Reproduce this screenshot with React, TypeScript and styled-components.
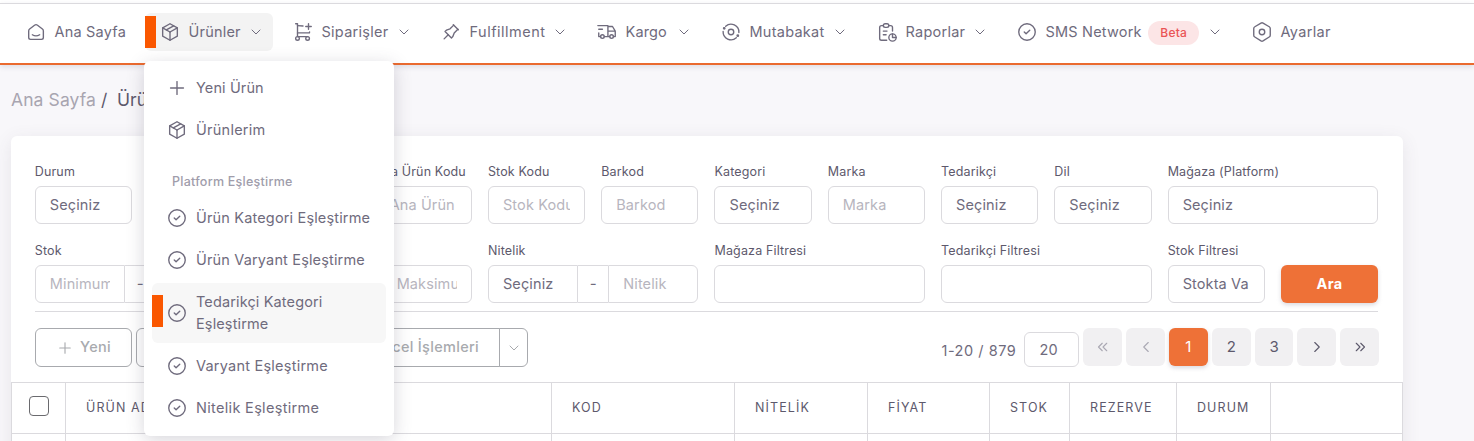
import React from 'react';
import styled, { createGlobalStyle, css } from 'styled-components';
import {
  TbSmartHome, TbPackage, TbPin, TbTruckDelivery, TbReport,
  TbCircleCheck, TbSettings2, TbPlus, TbChevronDown, TbChevronLeft, TbChevronRight, TbChevronsLeft, TbChevronsRight,
} from 'react-icons/tb';

const GlobalStyle = createGlobalStyle`
  * { box-sizing: border-box; }
  body {
    margin: 0;
    height: 441px;
    overflow: hidden;
    background: #f8f7fa;
    color: #6f6b7d;
    font: 400 15px/22px Inter, "Public Sans", sans-serif;
  }
  svg, svg * { stroke-width: 1.5; }
  svg { flex: none; display: block; }
  input, button { font: inherit; color: inherit; }
`;

const Page = styled.div`
  height: 441px;
  overflow: hidden;
  padding-top: 3px;
  background: #fff;
`;

const Navbar = styled.nav`
  position: relative;
  height: 62px;
  padding: 9px 0 0 11px;
  display: flex;
  border-top: 1px solid #dbdade;
  border-bottom: 2px solid #ea6a2f;
  box-shadow: 0 2px 5px rgba(75, 70, 92, 0.14);
`;

const NavItem = styled.div<{ $w: number; $active?: boolean }>`
  position: relative;
  flex: none;
  width: ${(p) => p.$w}px;
  height: 38px;
  margin-right: 5px;
  padding: 0 9px 0 13.5px;
  display: flex;
  align-items: center;
  border-radius: 6px;
  background: ${(p) => (p.$active ? '#f3f3f3' : 'transparent')};
`;

const Label = styled.span<{ $ls?: number; $size?: number }>`
  white-space: nowrap;
  font-size: ${(p) => p.$size ?? 14.5}px;
  letter-spacing: ${(p) => p.$ls ?? 0.12}px;
`;

const NavLabel = styled(Label)`
  margin: 0 auto 0 8px;
`;

const Marker = styled.i<{ $top: number }>`
  position: absolute;
  left: 0;
  top: ${(p) => p.$top}px;
  width: 11px;
  height: 32px;
  background: #fa5700;
`;

const Badge = styled.span`
  height: 24px;
  padding: 0 12px;
  margin: 2px 8px 0 0;
  border-radius: 12px;
  background: #fce5e6;
  color: #ea5455;
  font-size: 12px;
  font-weight: 500;
  letter-spacing: 0.2px;
  line-height: 24px;
`;

const Menu = styled.div`
  position: absolute;
  z-index: 5;
  left: 144px;
  top: 57px;
  width: 250px;
  height: 375px;
  padding: 8px;
  display: flex;
  flex-direction: column;
  gap: 4px;
  border-radius: 6px;
  background: #fff;
  box-shadow: 0 4px 18px rgba(75, 70, 92, 0.22);
`;

const MenuItem = styled.div<{ $active?: boolean }>`
  position: relative;
  display: flex;
  align-items: center;
  gap: 8px;
  padding: 8px 8px 8px 14px;
  border-radius: 6px;
  background: ${(p) => (p.$active ? '#f7f7f7' : 'transparent')};
`;

const MenuHeader = styled.div`
  height: 42px;
  padding: 18px 0 0 20px;
  color: #a09dab;
  font-weight: 500;
  line-height: 20px;
`;

const Main = styled.main`
  height: 376px;
  padding: 23px 71px 0 11px;
  background: #f8f7fa;
`;

const Breadcrumb = styled.div`
  height: 24px;
  margin-bottom: 24px;
  display: flex;
  font-size: 17.5px;
  line-height: 24px;
  color: #5d596c;
  white-space: pre;
`;

const Muted = styled.span`
  color: #a8a5b0;
  letter-spacing: 0.1px;
`;

const Card = styled.section`
  height: 340px;
  padding-top: 24px;
  border-radius: 6px;
  background: #fff;
  box-shadow: 0 4px 18px rgba(75, 70, 92, 0.1);
`;

const Filters = styled.div`
  display: grid;
  grid-template-columns: repeat(12, minmax(0, 1fr));
  column-gap: 16px;
  row-gap: 15px;
  margin: 0 24.8px 0 23.8px;
  padding-bottom: 8px;
  border-bottom: 1px solid #dbdade;
`;

const Field = styled.div<{ $span?: number }>`
  grid-column: span ${(p) => p.$span ?? 1};
  display: flex;
  flex-direction: column;
  justify-content: flex-end;
`;

const FieldLabel = styled.label`
  height: 26px;
  line-height: 22px;
  color: #5d596c;
  white-space: nowrap;
`;

const Control = styled.div<{ $muted?: boolean }>`
  flex: 1 1 0;
  min-width: 0;
  height: 38px;
  padding: 0 14px;
  border: 1px solid #dbdade;
  border-radius: 6px;
  background: #fff;
  color: ${(p) => (p.$muted ? '#b7b5be' : '#6f6b7d')};
  line-height: 35px;
`;

const Clip = styled.div`
  overflow: hidden;
  white-space: nowrap;
`;

const ControlRow = styled.div`
  display: flex;
  height: 38px;
`;

const Group = styled(ControlRow)`
  ${Control}:first-child { border-radius: 6px 0 0 6px; }
  ${Control}:last-child { border-radius: 0 6px 6px 0; }
`;

const Dash = styled.span`
  width: 30px;
  border: solid #dbdade;
  border-width: 1px 0;
  line-height: 35px;
  text-align: center;
`;

const SearchButton = styled.button`
  height: 38px;
  border: 0;
  border-radius: 6px;
  background: #ee7137;
  box-shadow: 0 2px 4px rgba(165, 163, 174, 0.4);
  color: #fff;
  font-size: 14.5px;
  font-weight: 700;
  letter-spacing: 0.3px;
`;

const Toolbar = styled.div`
  height: 70px;
  margin: 0 24px;
  padding-top: 16px;
  display: flex;
  align-items: flex-start;
`;

const outline = css`
  height: 39px;
  border: 1px solid #a8aaae;
  color: #a8aaae;
  font-size: 14.5px;
  font-weight: 500;
  letter-spacing: 0.3px;
  line-height: 36px;
  display: flex;
  justify-content: center;
  svg { align-self: center; }
`;

const OutlineButton = styled.div<{ $w: number; $r: string }>`
  ${outline}
  width: ${(p) => p.$w}px;
  border-radius: ${(p) => p.$r};
  margin-right: 4px;
  gap: 6px;
`;

const SplitMain = styled.div`
  ${outline}
  width: 228px;
  padding-right: 20px;
  justify-content: flex-end;
  border-radius: 6px 0 0 6px;
`;

const SplitToggle = styled.div`
  ${outline}
  width: 29px;
  margin-left: -1px;
  border-radius: 0 6px 6px 0;
`;

const Pager = styled.div`
  margin-left: auto;
  display: flex;
  gap: 4px;
`;

const Count = styled.span`
  margin: 12px 4px 0 0;
  white-space: nowrap;
`;

const PageSize = styled.div`
  width: 55px;
  height: 35px;
  margin-top: 4px;
  padding-left: 14px;
  border: 1px solid #dbdade;
  border-radius: 6px;
  line-height: 34px;
`;

const PageButton = styled.div<{ $active?: boolean; $disabled?: boolean }>`
  width: 38.8px;
  height: 38px;
  display: flex;
  align-items: center;
  justify-content: center;
  border-radius: 6px;
  background: ${(p) => (p.$active ? '#ee7137' : '#f1f0f2')};
  color: ${(p) => (p.$active ? '#fff' : p.$disabled ? '#aaa8b3' : '#5d596c')};
  box-shadow: ${(p) => (p.$active ? '0 2px 4px rgba(165,163,174,.4)' : 'none')};
`;

const Table = styled.div`
  display: grid;
  grid-template-columns: 54px 486px 183px 133px 122px 80px 107px 94px 132px;
  grid-template-rows: 51px 51px;
  height: 59px;
  overflow: hidden;
  border-left: 1px solid #dbdade;
`;

const Cell = styled.div`
  border-top: 1px solid #dbdade;
  border-right: 1px solid #dbdade;
  padding-left: 20px;
  line-height: 48px;
  color: #5d596c;
`;

const Checkbox = styled.span`
  display: block;
  width: 20px;
  height: 20px;
  margin: 13px 0 0 -3px;
  border: 1.5px solid #6a6a6e;
  border-radius: 4px;
`;

const LineIcon = styled.svg.attrs({ viewBox: '0 0 24 24', fill: 'none', stroke: 'currentColor', strokeLinecap: 'round', strokeLinejoin: 'round' })``;

function CartPlusIcon({ size = 22 }) {
  return (
    <LineIcon width={size} height={size}>
      <circle cx="6" cy="19" r="2" />
      <circle cx="17" cy="19" r="2" />
      <path d="M17 17H6V3H4" />
      <path d="M6 5l6.005 .429M19.143 12.002L19 13H6" />
      <path d="M15 6h6M18 3v6" />
    </LineIcon>
  );
}

function ReconcileIcon({ size = 22 }) {
  return (
    <LineIcon width={size} height={size}>
      <circle cx="12" cy="12" r="3" />
      <path d="M6.2 5.8a8.6 8.6 0 0 1 14.4 6.7" />
      <path d="M17.8 18.2a8.6 8.6 0 0 1 -14.4 -6.7" />
      <circle cx="4.6" cy="8" r=".8" fill="currentColor" />
      <circle cx="19.4" cy="16" r=".8" fill="currentColor" />
    </LineIcon>
  );
}

const NAV = [
  { icon: TbSmartHome, text: 'Ana Sayfa', w: 129, plain: true, ls: 0.2 },
  { icon: TbPackage, text: 'Ürünler', w: 128, active: true, ls: 0.2 },
  { icon: CartPlusIcon, text: 'Siparişler', w: 143, ls: 0.28 },
  { icon: TbPin, text: 'Fulfillment', w: 151, ls: 0.5 },
  { icon: TbTruckDelivery, text: 'Kargo', w: 119, ls: 0.15 },
  { icon: ReconcileIcon, text: 'Mutabakat', w: 151, ls: 0.25 },
  { icon: TbReport, text: 'Raporlar', w: 135, ls: 0.25 },
  { icon: TbCircleCheck, text: 'SMS Network', w: 230, badge: true, ls: 0.2 },
  { icon: TbSettings2, text: 'Ayarlar', w: 110, plain: true, ls: 0.3 },
];

const MATCH_ITEMS = [
  { lines: ['Ürün Kategori Eşleştirme'], ls: 0.16 },
  { lines: ['Ürün Varyant Eşleştirme'], ls: 0.16 },
  { lines: ['Tedarikçi Kategori', 'Eşleştirme'], ls: 0.13, active: true },
  { lines: ['Varyant Eşleştirme'], ls: 0.23 },
  { lines: ['Nitelik Eşleştirme'], ls: 0.32 },
];

function Input({ text = '', muted = false }) {
  return <Control $muted={muted}><Clip><Label>{text}</Label></Clip></Control>;
}

function FormField({ label, text, muted, span }: { label: string; text?: string; muted?: boolean; span?: number }) {
  return (
    <Field $span={span}>
      <FieldLabel><Label $size={12.5} $ls={0.15}>{label}</Label></FieldLabel>
      <ControlRow><Input text={text} muted={muted} /></ControlRow>
    </Field>
  );
}

function RangeField({ label, from, to, fromMuted }: { label: string; from: string; to: string; fromMuted?: boolean }) {
  return (
    <Field $span={2}>
      <FieldLabel><Label $size={12.5} $ls={0.15}>{label}</Label></FieldLabel>
      <Group><Input text={from} muted={fromMuted} /><Dash>-</Dash><Input text={to} muted /></Group>
    </Field>
  );
}

export default function App() {
  return (
    <Page>
      <GlobalStyle />
      <Navbar>
        {NAV.map(({ icon: Icon, text, w, active, plain, badge, ls }) => (
          <NavItem key={text} $w={w} $active={active}>
            {active && <Marker $top={3} />}
            <Icon size={22} />
            <NavLabel $ls={ls}>{text}</NavLabel>
            {badge && <Badge>Beta</Badge>}
            {!plain && <TbChevronDown size={16} />}
          </NavItem>
        ))}
        <Menu>
          <MenuItem><TbPlus size={22} /><Label>Yeni Ürün</Label></MenuItem>
          <MenuItem><TbPackage size={22} /><Label $ls={0.25}>Ürünlerim</Label></MenuItem>
          <MenuHeader><Label $size={12.5} $ls={0.25}>Platform Eşleştirme</Label></MenuHeader>
          {MATCH_ITEMS.map(({ lines, ls, active }) => (
            <MenuItem key={lines[0]} $active={active}>
              {active && <Marker $top={12} />}
              <TbCircleCheck size={22} />
              <Label $ls={ls}>{lines.map((s) => <div key={s}>{s}</div>)}</Label>
            </MenuItem>
          ))}
        </Menu>
      </Navbar>
      <Main>
        <Breadcrumb><Muted>Ana Sayfa</Muted> /  Ürünler</Breadcrumb>
        <Card>
          <Filters>
            <FormField label="Durum" text="Seçiniz" />
            <FormField label="" span={2} />
            <FormField label="Ana Ürün Kodu" text="Ana Ürün" muted />
            <FormField label="Stok Kodu" text="Stok Kodu" muted />
            <FormField label="Barkod" text="Barkod" muted />
            <FormField label="Kategori" text="Seçiniz" />
            <FormField label="Marka" text="Marka" muted />
            <FormField label="Tedarikçi" text="Seçiniz" />
            <FormField label="Dil" text="Seçiniz" />
            <FormField label="Mağaza (Platform)" text="Seçiniz" span={2} />
            <RangeField label="Stok" from="Minimum" to="" fromMuted />
            <RangeField label="" from="" to="Maksimum" fromMuted />
            <RangeField label="Nitelik" from="Seçiniz" to="Nitelik" />
            <FormField label="Mağaza Filtresi" span={2} />
            <FormField label="Tedarikçi Filtresi" span={2} />
            <FormField label="Stok Filtresi" text="Stokta Va" />
            <Field><SearchButton>Ara</SearchButton></Field>
          </Filters>
          <Toolbar>
            <OutlineButton $w={97} $r="6px"><TbPlus size={18} />Yeni</OutlineButton>
            <OutlineButton $w={132} $r="6px" />
            <SplitMain>Excel İşlemleri</SplitMain>
            <SplitToggle><TbChevronDown size={16} /></SplitToggle>
            <Pager>
              <Count><Label $ls={0.55}>1-20 / 879</Label></Count>
              <PageSize><Label>20</Label></PageSize>
              <PageButton $disabled><TbChevronsLeft size={18} /></PageButton>
              <PageButton $disabled><TbChevronLeft size={18} /></PageButton>
              <PageButton $active>1</PageButton>
              <PageButton>2</PageButton>
              <PageButton>3</PageButton>
              <PageButton><TbChevronRight size={18} /></PageButton>
              <PageButton><TbChevronsRight size={18} /></PageButton>
            </Pager>
          </Toolbar>
          <Table>
            <Cell><Checkbox /></Cell>
            {['ÜRÜN ADI', 'KOD', 'NİTELİK', 'FİYAT', 'STOK', 'REZERVE', 'DURUM', ''].map((t) => (
              <Cell key={t}><Label $size={12.5} $ls={1.1}>{t}</Label></Cell>
            ))}
            {Array.from({ length: 9 }, (_, i) => <Cell key={i} />)}
          </Table>
        </Card>
      </Main>
    </Page>
  );
}
